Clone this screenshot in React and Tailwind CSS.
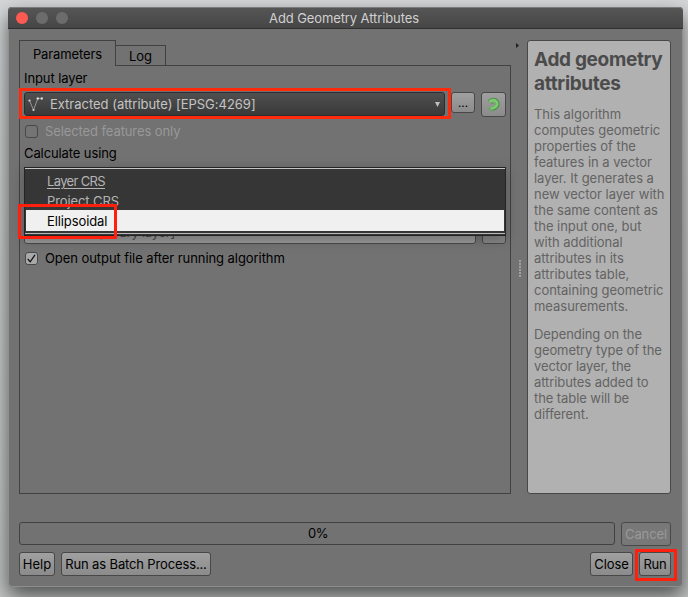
import React from "react";

const btn =
  "flex items-center justify-center whitespace-nowrap rounded-[3px] border border-[#484848] bg-linear-to-b from-[#a0a0a0] to-[#8b8b8b] text-black";

function Checkbox({ checked }) {
  return (
    <span
      className={
        "flex size-[13px] shrink-0 items-center justify-center rounded-[3px] border border-[#484848] " +
        (checked ? "bg-[#a9a9a9]" : "bg-[#747474]")
      }
    >
      {checked && (
        <svg width="11" height="11" viewBox="0 0 11 11" fill="none">
          <path d="M1.8 6 4.2 8.8 9 1.8" stroke="#0a0a0a" strokeWidth="1.2" />
        </svg>
      )}
    </span>
  );
}

function TitleBar() {
  return (
    <header className="relative flex h-[22px] shrink-0 items-center justify-center rounded-t-[4px] border-b border-[#303030] bg-linear-to-b from-[#565656] to-[#464646] pr-[3px] shadow-[inset_0_1px_0_#7b7b7b]">
      <div className="absolute left-[8px] top-[5px] flex gap-2">
        <span className="size-3 rounded-full bg-[#ff5a52]" />
        <span className="size-3 rounded-full bg-[#6c6c6c]" />
        <span className="size-3 rounded-full bg-[#6c6c6c]" />
      </div>
      <h1 className="text-[13px] leading-[22px] tracking-[-0.1px] text-[#d0d0d0]">Add Geometry Attributes</h1>
    </header>
  );
}

function LayerCombo() {
  return (
    <div className="flex h-[24px] w-[421px] items-center rounded-[3px] border border-[#292f31] bg-linear-to-b from-[#505050] to-[#393939] text-[#c4c4c4]">
      <svg className="ml-[2px] shrink-0" width="18" height="16" viewBox="0 0 18 16" fill="none">
        <path d="M2.5 4.5 6.5 14 10.8 2.5H15" stroke="#999999" strokeWidth="1" />
        <g fill="#d8d8d8">
          <circle cx="2.5" cy="4.5" r="1.1" />
          <circle cx="6.5" cy="14" r="1.1" />
          <circle cx="10.8" cy="2.5" r="1.2" />
          <circle cx="14.8" cy="2.5" r="1.2" />
        </g>
      </svg>
      <span className="ml-[5px] flex-1 tracking-[-0.02px]">Extracted (attribute) [EPSG:4269]</span>
      <svg className="mr-[4px]" width="5" height="5" viewBox="0 0 5 5">
        <path d="M0 0H5L2.5 5Z" fill="#c0c0c0" />
      </svg>
    </div>
  );
}

function CrsMenu() {
  return (
    <div className="absolute left-0 top-0 h-[69px] w-[482px] border border-[#242424] bg-[#363636] shadow-[0_3px_12px_rgba(0,0,0,0.25)]">
      <div className="h-px bg-[#c4c4c4]" />
      <div className="h-[24px] pl-[22px] leading-[24px] text-[#b4b4b4]">
        <span className="inline-block h-[20px] tracking-[-0.65px] underline underline-offset-2">Layer CRS</span>
      </div>
      <div className="h-[17px] overflow-hidden pl-[22px] leading-[17px] tracking-[-0.1px] text-[#b4b4b4]">Project CRS</div>
      <div className="mx-px h-[21px] bg-[#f0f0f0] pl-[21px] leading-[22px] tracking-[-0.1px] text-black">Ellipsoidal</div>
      <div className="mt-[2px] h-px bg-[#b8b8b8]" />
    </div>
  );
}

function ParametersPanel() {
  return (
    <section className="-mt-px flex flex-1 flex-col border border-[#414141] pl-1">
      <div className="mt-[4px] h-[16px] leading-[16px] tracking-[-0.1px]">Input layer</div>
      <div className="mt-[6px] flex items-start">
        <LayerCombo />
        <button className={btn + " ml-[6px] h-[21px] w-[24px] text-[11px] font-medium"}>...</button>
        <button className={btn + " ml-[6px] h-[25px] w-[25px]"}>
          <svg width="15" height="16" viewBox="0 0 15 16" fill="none">
            <path d="M3.2 5.2C5.2 2.2 9.5 2.1 11 4.8 12.8 8.2 10.2 11.6 6.5 11.5" stroke="#4a8f45" strokeWidth="4" />
            <path d="M7.2 8.6V15L2.2 11.6Z" fill="#5aa552" />
            <path d="M3.4 5.2C5.4 2.7 9 2.6 10.6 5 12.2 8.2 9.8 11 4.6 11.4" stroke="#7cc970" strokeWidth="2.8" />
            <path d="M4.6 7.4C5.6 5.6 7.8 5.5 8 7.2" stroke="#559a4e" strokeWidth="1" />
          </svg>
        </button>
      </div>
      <label className="mt-[6px] flex h-[16px] items-center gap-[7px] pl-px tracking-[-0.1px] text-[#989898]">
        <Checkbox />
        Selected features only
      </label>
      <div className="mt-[6px] h-[16px] leading-[16px] tracking-[-0.1px]">Calculate using</div>
      <div className="relative mt-[6px] h-[77px]">
        <div className="flex pt-[53px]">
          <div className="h-[24px] w-[452px] rounded-[3px] border border-[#484848] bg-[#979797] pl-[5px] leading-[22px] tracking-[-0.25px] text-[#484848]">
            [Create temporary layer]
          </div>
          <div className="ml-[6px] h-[24px] w-[24px] rounded-[3px] border border-[#484848] bg-[#858585]" />
        </div>
        <CrsMenu />
      </div>
      <label className="mt-[6px] flex h-[16px] items-center gap-[7px] pl-px tracking-[-0.07px]">
        <Checkbox checked />
        Open output file after running algorithm
      </label>
    </section>
  );
}

function HelpPanel() {
  return (
    <aside className="w-[144px] shrink-0 whitespace-nowrap rounded-[3px] border border-[#484848] bg-[#b1b1b1] pl-[6px] text-[#636363]">
      <h2 className="mt-[7px] text-[19px] font-bold leading-[24px] tracking-[-0.32px] text-[#4b4b4b]">
        Add geometry
        <br />
        attributes
      </h2>
      <p className="mt-[10px] leading-[16px] tracking-[-0.03px]">
        This algorithm<br />computes geometric<br />properties of the<br />features in a vector<br />layer. It generates a<br />
        new vector layer with<br />the same content as<br />the input one, but<br />with additional<br />attributes in its<br />
        attributes table,<br />containing geometric<br />measurements.
      </p>
      <p className="mt-[12px] leading-[16px] tracking-[-0.08px]">
        Depending on the<br />geometry type of the<br />vector layer, the<br />attributes added to<br />the table will be<br />different.
      </p>
    </aside>
  );
}

export default function App() {
  return (
    <div className="relative h-[597px] w-[688px] overflow-hidden bg-linear-to-b from-[#d4d6d7] to-[#c4c6c6] pl-[8px] pt-[7px] font-['Inter',sans-serif] text-[13px] leading-[16px]">
      <main className="flex h-[580px] w-[675px] flex-col rounded-[5px] bg-[#727272] shadow-[0_0_0_1px_#8e8e8e_inset,0_9px_20px_rgba(0,0,0,0.6)]">
        <TitleBar />
        <div className="mt-[11px] flex h-[454px] shrink-0 pl-[11px]">
          <div className="flex w-[492px] flex-col">
            <nav className="flex h-[26px] items-end">
              <div className="relative z-10 flex h-[26px] w-[97px] items-center justify-center border border-b-0 border-[#414141] bg-[#727272] tracking-[-0.1px]">
                Parameters
              </div>
              <div className="flex h-[21px] w-[50px] items-center justify-center border border-l-0 border-[#414141] pt-px">Log</div>
            </nav>
            <ParametersPanel />
          </div>
          <div className="flex w-[16px] flex-col items-center">
            <svg className="ml-[-4px] mt-[3px]" width="3" height="5" viewBox="0 0 3 5">
              <path d="M0 0 3 2.5 0 5Z" fill="#202020" />
            </svg>
            <div className="ml-px mt-[212px] h-[17px] w-[2px] bg-[repeating-linear-gradient(to_bottom,#a0a0a0_0_2px,#727272_2px_3px)]" />
          </div>
          <HelpPanel />
        </div>
        <div className="mt-[28px] flex items-start gap-[6px] pl-[11px]">
          <div className="flex h-[23px] w-[596px] items-center justify-center rounded-[3px] border border-[#414141] pb-px pl-[2px] tracking-[-0.4px]">
            0%
          </div>
          <div className="flex h-[24px] w-[50px] items-center justify-center rounded-[3px] border border-[#484848] bg-[#787878] tracking-[-0.1px] text-[#999]">
            Cancel
          </div>
        </div>
        <footer className="mt-[6px] flex gap-[6px] pl-[11px]">
          <button className={btn + " h-[24px] w-[36px]"}>Help</button>
          <button className={btn + " h-[24px] w-[150px] tracking-[-0.14px]"}>Run as Batch Process...</button>
          <button className={btn + " ml-[373px] h-[24px] w-[43px] tracking-[-0.1px]"}>Close</button>
          <button className={btn + " h-[24px] w-[32px] tracking-[-0.2px]"}>Run</button>
        </footer>
      </main>
      <div className="absolute left-[19px] top-[88px] h-[31px] w-[432px] border-[3px] border-[#ff2a0b]" />
      <div className="absolute left-[18px] top-[204px] h-[35px] w-[99px] border-[3px] border-[#ff1f0c]" />
      <div className="absolute left-[635px] top-[549px] h-[32px] w-[42px] border-[3px] border-[#ff1f0c]" />
    </div>
  );
}
